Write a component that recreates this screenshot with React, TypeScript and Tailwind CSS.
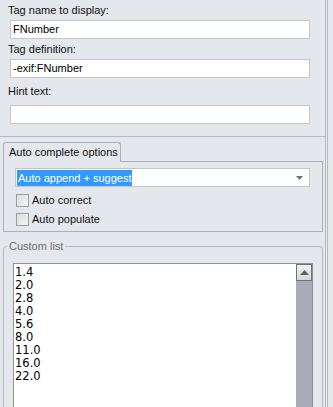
import React from "react";

const Field = ({ value }: { value: string }) => (
  <div className="ml-[2px] w-[300px] h-[19px] bg-white border border-[#c3c7cd] pl-[2px] leading-[17px] text-black">
    {value}
  </div>
);

const Check = ({ label }: { label: string }) => (
  <div className="flex items-center h-[13px]">
    <div className="w-[13px] h-[13px] border border-[#9a9ea5] bg-gradient-to-br from-[#dcdde0] to-[#f4f4f5]" />
    <span className="ml-[3px] leading-[13px]">{label}</span>
  </div>
);

export default function App() {
  const items = ["1.4", "2.0", "2.8", "4.0", "5.6", "8.0", "11.0", "16.0", "22.0"];
  return (
    <div className="w-[333px] h-[407px] overflow-hidden bg-[#e4e7eb] flex font-['Liberation_Sans',Arial,sans-serif] text-[11px] text-[#111]">
      <div className="w-[326px] shrink-0 flex flex-col border-r border-[#b3b8bf] overflow-hidden">
        {/* top section */}
        <div className="shrink-0 h-[137px] border-b border-[#b5b9c0] pl-[8px] flex flex-col">
          <div className="mt-[3px] h-[14px] leading-[14px]">Tag name to display:</div>
          <div className="mt-[3px]"><Field value="FNumber" /></div>
          <div className="mt-[3px] h-[14px] leading-[14px]">Tag definition:</div>
          <div className="mt-[3px]"><Field value="-exif:FNumber" /></div>
          <div className="mt-[6px] h-[14px] leading-[14px]">Hint text:</div>
          <div className="mt-[7px]"><Field value="" /></div>
        </div>
        {/* tab */}
        <div className="shrink-0 pl-[3px] pr-[2px] pt-[5px]">
          <div className="relative z-10 -mb-px w-[118px] h-[20px] border border-b-0 border-[#aab0b8] rounded-t-[3px] bg-[#e4e7eb] pl-[5px] leading-[19px]">
            Auto complete options
          </div>
          <div className="h-[71px] border border-[#aab0b8] flex flex-col">
            <div className="mt-[6px] ml-[11px] w-[295px] h-[19px] bg-white border border-[#c3c7cd] flex items-center pl-[1px]">
              <span className="bg-[#3399ff] text-white h-[16px] leading-[16px] px-[1px]">Auto append + suggest</span>
              <div className="ml-auto mr-[6px]">
                <svg width="7" height="4" viewBox="0 0 7 4"><path d="M0 0H7L3.5 4Z" fill="#6d7178" /></svg>
              </div>
            </div>
            <div className="mt-[7px] ml-[12px]"><Check label="Auto correct" /></div>
            <div className="mt-[6px] ml-[12px]"><Check label="Auto populate" /></div>
          </div>
        </div>
        {/* group box */}
        <div className="relative pl-[3px] pr-[2px] mt-[7px] flex-1 min-h-0 flex flex-col">
          <div className="relative flex-1 min-h-0 mt-[7px] border border-b-0 border-[#b5bac1] rounded-t-[4px]">
            <div className="absolute -top-[8px] left-[3px] bg-[#e4e7eb] px-[2px] leading-[14px] text-[#6e7177]">Custom list</div>
            <div className="mt-[16px] ml-[9px] w-[300px] h-[200px] bg-white border border-[#8f949b] border-r-0 flex">
              <div className="flex-1 pl-[1px] pt-[2px] flex flex-col font-['DejaVu_Sans',sans-serif] text-[11.5px] text-black">
                {items.map((t) => (
                  <div key={t} className="h-[13px] leading-[13px]">{t}</div>
                ))}
              </div>
              <div className="w-[17px] bg-[#a9abb6] flex flex-col border-r border-[#8a8d96]">
                <div className="h-[17px] border border-[#6f7279] bg-gradient-to-b from-[#f2f2f2] to-[#d6d7da] flex items-center justify-center">
                  <svg width="9" height="5" viewBox="0 0 9 5"><path d="M0 5H9L4.5 0Z" fill="#5e6167" /></svg>
                </div>
              </div>
            </div>
          </div>
        </div>
      </div>
      <div className="w-[1px] shrink-0 bg-[#e9ecef]" />
      <div className="w-[1px] shrink-0 bg-[#b7bcc3]" />
      <div className="flex-1 bg-[#e6e9ec]" />
    </div>
  );
}
